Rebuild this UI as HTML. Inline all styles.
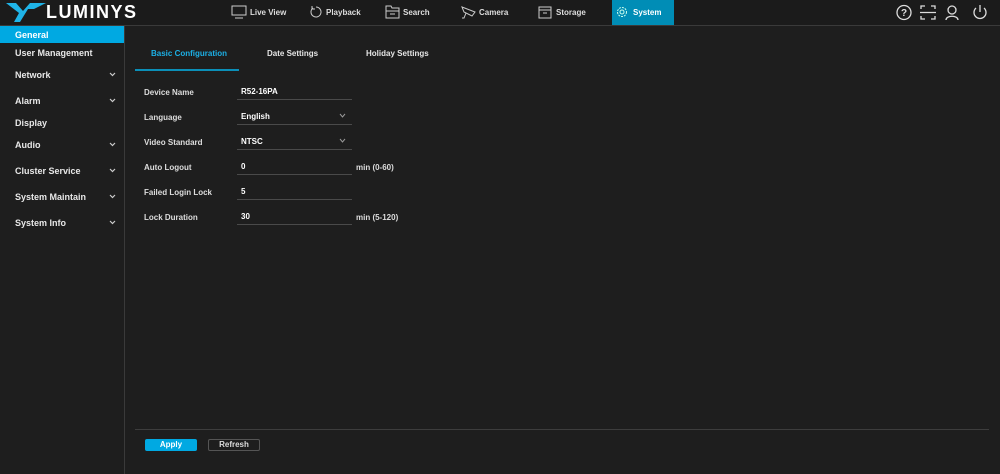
<!DOCTYPE html><html><head><style>
body{margin:0;width:1000px;height:474px;background:#1e1e1e;font-family:"Liberation Sans",sans-serif;color:#e6e6e6;overflow:hidden;position:relative;font-size:8px;font-weight:bold}
.a{position:absolute}
.hdr{left:0;top:0;width:1000px;height:25px;background:#1b1b1b;border-bottom:1px solid #3a3a3a}
.nav{top:8px;font-size:8px;color:#ddd}
.side{left:0;top:26px;width:124px;height:448px;border-right:1px solid #3a3a3a}
.si{position:absolute;left:15px;font-size:9px;color:#e8e8e8}
.ch{position:absolute;left:109px;width:7px;height:5px}
.lbl{left:144px;font-size:8px;color:#ddd}
.inp{left:237px;width:115px;border-bottom:1px solid #4a4a4a;height:14px;font-size:8px;color:#fff}
.inp span{position:absolute;left:4px;top:2px}
.dd{position:absolute;right:6px;top:3px}
.unit{left:356px;font-size:8px;color:#ddd}
</style></head><body>
<div class="a hdr"></div>
<svg class="a" style="left:6px;top:3px" width="40" height="19" viewBox="0 0 40 19"><path d="M0 0H10L17 8L24 0H40L28 6H22L14 19H8L13 10Z" fill="#1fb4e8"/></svg>
<div class="a" style="left:46px;top:2px;font-size:18px;font-weight:bold;color:#fff;letter-spacing:1.5px">LUMINYS</div>
<svg class="a" style="left:231px;top:5px" width="16" height="14"><rect x="1" y="1" width="14" height="9" fill="none" stroke="#ccc"/><path d="M4 13H12" stroke="#ccc"/></svg>
<div class="a nav" style="left:250px">Live View</div>
<svg class="a" style="left:309px;top:5px" width="14" height="14"><path d="M4 3A5 5 0 1 0 7 2" fill="none" stroke="#ccc"/><path d="M3 1V4H6" fill="none" stroke="#ccc"/></svg>
<div class="a nav" style="left:326px">Playback</div>
<svg class="a" style="left:385px;top:5px" width="15" height="14"><path d="M1 1H6L7 3H14V13H1Z M1 6H14 M5 9H10" fill="none" stroke="#ccc"/></svg>
<div class="a nav" style="left:403px">Search</div>
<svg class="a" style="left:461px;top:5px" width="16" height="14"><path d="M1 2L14 7L11 11L3 7Z M5 8L3 13H1" fill="none" stroke="#ccc"/></svg>
<div class="a nav" style="left:479px">Camera</div>
<svg class="a" style="left:538px;top:5px" width="14" height="14"><rect x="1" y="2" width="12" height="11" fill="none" stroke="#ccc"/><path d="M1 5H13 M5 8H9" stroke="#ccc"/></svg>
<div class="a nav" style="left:556px">Storage</div>
<div class="a" style="left:612px;top:0;width:62px;height:25px;background:#008db6"></div>
<svg class="a" style="left:616px;top:6px" width="12" height="12"><circle cx="6" cy="6" r="4.5" fill="none" stroke="#cfe" stroke-dasharray="2 1"/><circle cx="6" cy="6" r="2" fill="none" stroke="#cfe"/></svg>
<div class="a nav" style="left:633px;color:#fff">System</div>
<svg class="a" style="left:896px;top:4px" width="92" height="17" viewBox="0 0 92 17"><circle cx="8" cy="8.5" r="7" fill="none" stroke="#ddd" stroke-width="1.3"/><text x="5" y="12" font-size="10" fill="#ddd" font-family="Liberation Sans" font-weight="bold">?</text><path d="M25 5V2H29M35 2H39V5M25 12V15H29M35 15H39V12M24 8.5H40" fill="none" stroke="#ddd" stroke-width="1.3"/><circle cx="56" cy="6" r="4" fill="none" stroke="#ddd" stroke-width="1.3"/><path d="M50 16C50 11 62 11 62 16" fill="none" stroke="#ddd" stroke-width="1.3"/><path d="M80 4A6 6 0 1 0 88 4M84 1V8" fill="none" stroke="#ddd" stroke-width="1.3"/></svg>
<div class="a side"></div>
<div class="a" style="left:0;top:26px;width:124px;height:17px;background:#00a9e2"></div>
<div class="si" style="top:30px;color:#fff">General</div>
<div class="si" style="top:48px">User Management</div>
<div class="si" style="top:70px">Network</div><svg class="ch" style="top:72px"><path d="M1 1L3.5 3.5L6 1" fill="none" stroke="#ccc" stroke-width="1.2"/></svg>
<div class="si" style="top:96px">Alarm</div><svg class="ch" style="top:98px"><path d="M1 1L3.5 3.5L6 1" fill="none" stroke="#ccc" stroke-width="1.2"/></svg>
<div class="si" style="top:118px">Display</div>
<div class="si" style="top:140px">Audio</div><svg class="ch" style="top:142px"><path d="M1 1L3.5 3.5L6 1" fill="none" stroke="#ccc" stroke-width="1.2"/></svg>
<div class="si" style="top:166px">Cluster Service</div><svg class="ch" style="top:168px"><path d="M1 1L3.5 3.5L6 1" fill="none" stroke="#ccc" stroke-width="1.2"/></svg>
<div class="si" style="top:192px">System Maintain</div><svg class="ch" style="top:194px"><path d="M1 1L3.5 3.5L6 1" fill="none" stroke="#ccc" stroke-width="1.2"/></svg>
<div class="si" style="top:218px">System Info</div><svg class="ch" style="top:220px"><path d="M1 1L3.5 3.5L6 1" fill="none" stroke="#ccc" stroke-width="1.2"/></svg>
<div class="a" style="left:151px;top:49px;color:#1cb0e6">Basic Configuration</div>
<div class="a" style="left:135px;top:69px;width:104px;height:2px;background:#0b8fb8"></div>
<div class="a" style="left:267px;top:49px">Date Settings</div>
<div class="a" style="left:366px;top:49px">Holiday Settings</div>
<div class="a lbl" style="top:88px">Device Name</div><div class="a inp" style="top:85px"><span>R52-16PA</span></div>
<div class="a lbl" style="top:113px">Language</div><div class="a inp" style="top:110px"><span>English</span><svg class="dd" width="7" height="5"><path d="M1 1L3.5 4L6 1" fill="none" stroke="#999"/></svg></div>
<div class="a lbl" style="top:138px">Video Standard</div><div class="a inp" style="top:135px"><span>NTSC</span><svg class="dd" width="7" height="5"><path d="M1 1L3.5 4L6 1" fill="none" stroke="#999"/></svg></div>
<div class="a lbl" style="top:163px">Auto Logout</div><div class="a inp" style="top:160px"><span>0</span></div><div class="a unit" style="top:163px">min (0-60)</div>
<div class="a lbl" style="top:188px">Failed Login Lock</div><div class="a inp" style="top:185px"><span>5</span></div>
<div class="a lbl" style="top:213px">Lock Duration</div><div class="a inp" style="top:210px"><span>30</span></div><div class="a unit" style="top:213px">min (5-120)</div>
<div class="a" style="left:135px;top:429px;width:854px;height:1px;background:#3d3d3d"></div>
<div class="a" style="left:145px;top:439px;width:52px;height:12px;background:#00a9e2;border-radius:2px;color:#fff;text-align:center;line-height:12px">Apply</div>
<div class="a" style="left:208px;top:439px;width:50px;height:10px;border:1px solid #555;border-radius:2px;color:#ddd;text-align:center;line-height:10px">Refresh</div>
</body></html>
